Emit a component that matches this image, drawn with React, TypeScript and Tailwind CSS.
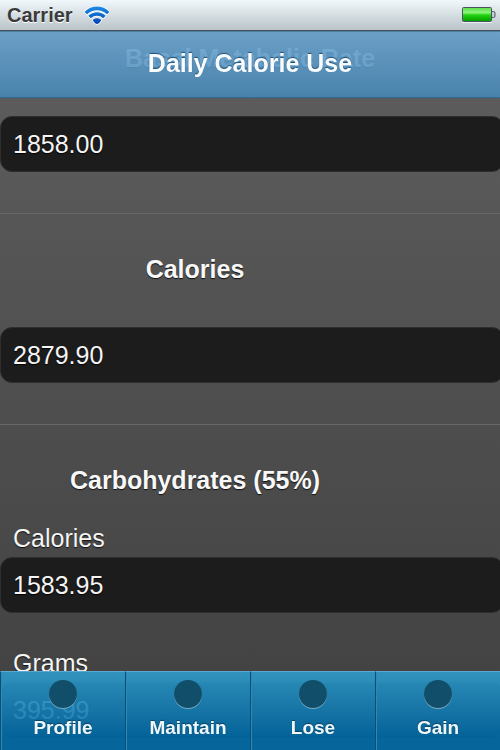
import { useId } from "react";
import type { ReactNode } from "react";

const tabs = ["Profile", "Maintain", "Lose", "Gain"];

const inputClass =
  "block h-14 w-[calc(100%+4px)] rounded-xl border border-[#2e2e2e] bg-[#1c1c1c] px-3 text-[25px] text-[#f5f5f5] outline-none [text-shadow:0_1px_1px_#000]";

const headingClass =
  "text-center text-[25px] leading-8 font-bold text-[#f8f8f8] [text-shadow:0_1px_1px_#111]";

function Section({ children }: { children: ReactNode }) {
  return (
    <section className="border-t border-[#686868] pt-[39px] pb-[41px]">
      {children}
    </section>
  );
}

function Total({
  title,
  value,
  wide = false,
}: {
  title: string;
  value: string;
  wide?: boolean;
}) {
  const id = useId();
  return (
    <Section>
      <h2 className={`${headingClass} ${wide ? "w-full" : "w-[78%]"}`}>
        <label htmlFor={id}>{title}</label>
      </h2>
      <div className="mt-[42px]">
        <input id={id} className={inputClass} defaultValue={value} />
      </div>
    </Section>
  );
}

function Field({ label, value }: { label: string; value: string }) {
  const id = useId();
  return (
    <div>
      <label
        htmlFor={id}
        className="mb-[3px] block px-[13px] text-[25px] leading-8 text-[#f5f5f5] [text-shadow:0_1px_1px_#111]"
      >
        {label}
      </label>
      <input id={id} className={inputClass} defaultValue={value} />
    </div>
  );
}

function WifiIcon() {
  return (
    <svg viewBox="0 0 28 20" className="h-5 w-7" aria-hidden="true">
      <defs>
        <linearGradient id="wifi" x1="0" y1="0" x2="0" y2="20" gradientUnits="userSpaceOnUse">
          <stop offset="0" stopColor="#1a93ea" />
          <stop offset="1" stopColor="#0540b0" />
        </linearGradient>
      </defs>
      <g stroke="#fff" strokeWidth="1.5" strokeLinejoin="round" paintOrder="stroke" fill="url(#wifi)">
        <path d="M1.500 6.900C8.500-.2 19.500-.2 26.500 6.900L24 9.300C18.400 4 9.600 4 4 9.300Z" />
        <path d="M5.300 10.700C10.200 6 17.800 6 22.700 10.700L20.200 13.200C16.700 9.900 11.300 9.900 7.800 13.200Z" />
        <path d="M9.600 14.900C12 12.600 16 12.600 18.400 14.900Q16 19 14 19Q12 19 9.600 14.900Z" />
      </g>
    </svg>
  );
}

function BatteryIcon() {
  return (
    <svg viewBox="0 0 34 18" className="h-[18px] w-[34px]" aria-hidden="true">
      <defs>
        <linearGradient id="charge" x1="0" y1="0" x2="0" y2="1">
          <stop offset="0" stopColor="#5fe04c" />
          <stop offset="0.35" stopColor="#8df57c" />
          <stop offset="0.55" stopColor="#1fd00f" />
          <stop offset="1" stopColor="#08a000" />
        </linearGradient>
      </defs>
      <path d="M30 5.500h1.500q1.500 0 1.500 1.500v3q0 1.500-1.500 1.500H30" fill="#c3cbd3" stroke="#4d5967" />
      <rect x="0.500" y="1.500" width="29" height="14" rx="1" fill="#7fd873" stroke="#4a5563" />
      <rect x="1" y="2" width="28" height="13" fill="url(#charge)" />
      <path d="M0 16.500h30" stroke="#fff" opacity="0.7" />
    </svg>
  );
}

export default function App() {
  return (
    <div className="h-dvh overflow-hidden bg-linear-to-b from-[#606060] to-[#404040] font-['Liberation_Sans',Arial,sans-serif]">
      <header className="fixed inset-x-0 top-0 z-10">
        <div className="flex h-[31px] items-center justify-between border-b border-[#46515a] bg-linear-to-b from-[#f1f8fb] to-[#bac4c9] pr-1 pl-[7px]">
          <div className="flex items-center gap-[10px]">
            <span className="text-xl leading-6 font-bold text-[#3b3b3b] [text-shadow:0_1px_0_#fff]">
              Carrier
            </span>
            <WifiIcon />
          </div>
          <BatteryIcon />
        </div>
        <h1 className="h-[67px] border-y border-t-[#4b7fa6] border-b-[#2f6c94] bg-linear-to-b from-[#6ea7d3]/90 to-[#4687b5]/90 bg-clip-padding text-center text-[25px] leading-[63px] font-bold text-[#f8fcff] [text-shadow:0_-1px_1px_#1e4f74]">
          Daily Calorie Use
        </h1>
      </header>

      <main className="h-full overflow-x-hidden overflow-y-auto pt-0.5 pb-20 [scrollbar-width:none]">
        <Total title="Basal Metabolic Rate" value="1858.00" wide />
        <Total title="Calories" value="2879.90" />
        <Section>
          <h2 className={`${headingClass} w-[78%]`}>Carbohydrates (55%)</h2>
          <div className="mt-[26px] flex flex-col gap-[34px]">
            <Field label="Calories" value="1583.95" />
            <Field label="Grams" value="395.99" />
          </div>
        </Section>
      </main>

      <nav className="fixed inset-x-0 bottom-0 z-10 grid grid-cols-4">
        {tabs.map((tab) => (
          <a
            key={tab}
            href={`#${tab.toLowerCase()}`}
            className="flex h-[79px] flex-col items-center gap-2 border-t border-l border-t-[#58a9cd] border-l-[#075178] bg-linear-to-b from-[#2f9dcc]/90 to-[#006aa6]/90 to-85% bg-clip-padding pt-2 shadow-[inset_1px_0_0_#2e8ab4]"
          >
            <span className="size-7 rounded-full bg-[#114e69] shadow-[0_1px_0_#75a9c4]" />
            <span className="text-[19px] leading-6 font-bold text-[#eef7fc] [text-shadow:0_-1px_1px_#0b4260]">
              {tab}
            </span>
          </a>
        ))}
      </nav>
    </div>
  );
}
